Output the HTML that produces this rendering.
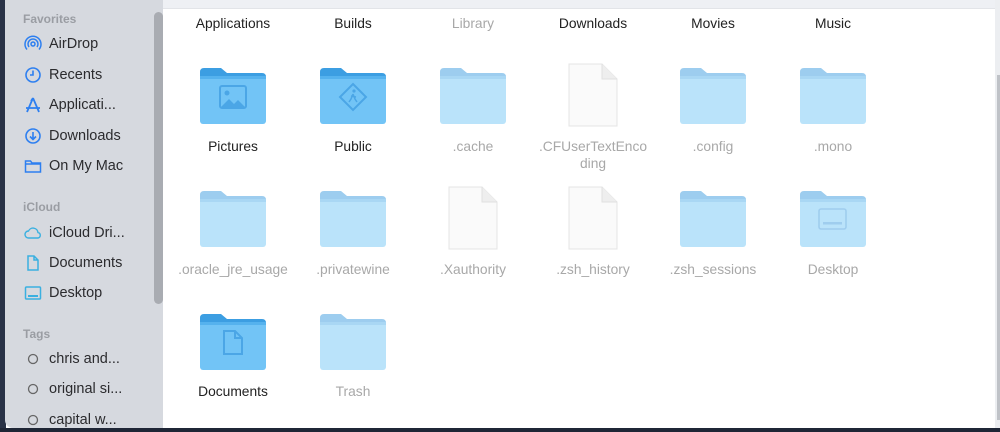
<!DOCTYPE html>
<html><head><meta charset="utf-8"><style>
*{margin:0;padding:0;box-sizing:border-box}
body{width:1000px;height:432px;overflow:hidden;background:#fff;font-family:"Liberation Sans",sans-serif;position:relative}
.lstrip{position:absolute;left:0;top:0;width:6px;height:432px;background:#2a3347}
.side{position:absolute;left:5px;top:0;width:158px;height:428px;background:#d6d9df;border-radius:0 0 0 8px}
.sb{position:absolute;left:149px;top:12px;width:9px;height:292px;background:#a9acb2;border-radius:5px}
.sec{position:absolute;left:23px;font-size:12px;color:#9a9da3;font-weight:bold}
.it{position:absolute;left:49px;font-size:14.5px;color:#2b2b2e}
.ic{position:absolute;left:24px;width:18px;height:18px}
.top{position:absolute;left:163px;top:0;width:837px;height:9px;background:#eef0f4;border-bottom:1px solid #e2e4e8}
.rstrip{position:absolute;left:995px;top:0;width:5px;height:432px;background:#eceef1}
.rbar{position:absolute;left:997px;top:75px;width:3px;height:345px;background:#bfc2c7}
.bot{position:absolute;left:0;top:428px;width:1000px;height:4px;background:#1f2636}
.lab{position:absolute;width:120px;text-align:center;font-size:13.8px;color:#222;line-height:17px}
.f{color:#a8a8a8}
svg.fd{position:absolute;width:66px;height:58px}
svg.doc{position:absolute;width:50px;height:64px}
</style></head><body>
<div class="lstrip"></div>
<div class="side">
<div class="sb"></div>
</div>
<div class="sec" style="top:12px">Favorites</div>
<svg class="ic" style="top:35px" viewBox="0 0 18 18" fill="none" stroke="#2d7ff0" stroke-width="1.5"><circle cx="9" cy="9" r="2"/><path d="M5 12a5 5 0 1 1 8 0M3 14.5a8 8 0 1 1 12 0"/></svg>
<div class="it" style="top:36px">AirDrop</div>
<svg class="ic" style="top:66px" viewBox="0 0 18 18" fill="none" stroke="#2d7ff0" stroke-width="1.6"><circle cx="9" cy="9" r="7"/><path d="M9 4.5V9H6"/></svg>
<div class="it" style="top:67px">Recents</div>
<svg class="ic" style="top:96px" viewBox="0 0 18 18" fill="none" stroke="#2d7ff0" stroke-width="1.8"><path d="M9 2L3 16M9 2l6 14M2 12h14M9 2l-2 3"/></svg>
<div class="it" style="top:97px">Applicati...</div>
<svg class="ic" style="top:127px" viewBox="0 0 18 18" fill="none" stroke="#2d7ff0" stroke-width="1.6"><circle cx="9" cy="9" r="7"/><path d="M9 5v7M6 9.5l3 3 3-3"/></svg>
<div class="it" style="top:128px">Downloads</div>
<svg class="ic" style="top:157px" viewBox="0 0 18 18" fill="none" stroke="#2d7ff0" stroke-width="1.5"><path d="M1.5 4h5l1.5 2h8.5v9h-15zM1.5 7h15"/></svg>
<div class="it" style="top:158px">On My Mac</div>
<div class="sec" style="top:200px">iCloud</div>
<svg class="ic" style="top:224px" viewBox="0 0 18 18" fill="none" stroke="#3ab0e0" stroke-width="1.4"><path d="M4.5 14a3.5 3.5 0 0 1 0-7 5 5 0 0 1 9.5 1.5A2.8 2.8 0 0 1 14 14z"/></svg>
<div class="it" style="top:225px">iCloud Dri...</div>
<svg class="ic" style="top:254px" viewBox="0 0 18 18" fill="none" stroke="#3ab0e0" stroke-width="1.5"><path d="M4 2h6l4 4v10H4zM10 2v4h4"/></svg>
<div class="it" style="top:255px">Documents</div>
<svg class="ic" style="top:284px" viewBox="0 0 18 18" fill="none" stroke="#3ab0e0" stroke-width="1.5"><rect x="1.5" y="3" width="15" height="12" rx="1"/><path d="M4 12h10" stroke-width="2"/></svg>
<div class="it" style="top:285px">Desktop</div>
<div class="sec" style="top:327px">Tags</div>
<svg class="ic" style="top:350px" viewBox="0 0 18 18" fill="none" stroke="#666" stroke-width="1.3"><circle cx="9" cy="9" r="4.5"/></svg>
<div class="it" style="top:351px">chris and...</div>
<svg class="ic" style="top:380px" viewBox="0 0 18 18" fill="none" stroke="#666" stroke-width="1.3"><circle cx="9" cy="9" r="4.5"/></svg>
<div class="it" style="top:381px">original si...</div>
<svg class="ic" style="top:411px" viewBox="0 0 18 18" fill="none" stroke="#666" stroke-width="1.3"><circle cx="9" cy="9" r="4.5"/></svg>
<div class="it" style="top:412px">capital w...</div>

<div class="top"></div>
<div class="rstrip"></div><div class="rbar"></div>

<div class="lab" style="left:173px;top:15px">Applications</div>
<div class="lab" style="left:293px;top:15px">Builds</div>
<div class="lab f" style="left:413px;top:15px">Library</div>
<div class="lab" style="left:533px;top:15px">Downloads</div>
<div class="lab" style="left:653px;top:15px">Movies</div>
<div class="lab" style="left:773px;top:15px">Music</div>

<!-- row 1 -->
<svg class="fd" style="left:200px;top:67px" viewBox="0 0 66 58"><path d="M0 5Q0 1 4 1H21L27 6H62Q66 6 66 10V20H0Z" fill="#3c9ee2"/><rect x="0" y="9" width="66" height="48" rx="3" fill="#72c4f6"/><rect x="0" y="9" width="66" height="3" fill="#55b2ee"/><rect x="20" y="19" width="26" height="22" rx="2" fill="none" stroke="#4ba6e6" stroke-width="2"/><circle cx="27" cy="26" r="2.5" fill="#4ba6e6"/><path d="M21 40l8-8 5 5 4-4 7 7z" fill="#4ba6e6"/></svg>
<svg class="fd" style="left:320px;top:67px" viewBox="0 0 66 58"><path d="M0 5Q0 1 4 1H21L27 6H62Q66 6 66 10V20H0Z" fill="#3c9ee2"/><rect x="0" y="9" width="66" height="48" rx="3" fill="#72c4f6"/><rect x="0" y="9" width="66" height="3" fill="#55b2ee"/><path d="M33 17L46 30 33 43 20 30Z" fill="none" stroke="#4ba6e6" stroke-width="2"/><circle cx="34" cy="24" r="1.6" fill="#4ba6e6"/><path d="M33 27l-2 5-2 3M33 27l2 5 2 3M31 29l5 1" stroke="#4ba6e6" stroke-width="1.5" fill="none"/></svg>
<svg class="fd" style="left:440px;top:67px" viewBox="0 0 66 58"><path d="M0 5Q0 1 4 1H21L27 6H62Q66 6 66 10V20H0Z" fill="#9dcdef"/><rect x="0" y="9" width="66" height="48" rx="3" fill="#bae3fa"/><rect x="0" y="9" width="66" height="3" fill="#a9d7f4"/></svg>
<svg class="doc" style="left:568px;top:63px" viewBox="0 0 50 64"><path d="M1 1H34L49 16V63H1Z" fill="#fafafa" stroke="#e4e4e4"/><path d="M34 1V16H49" fill="#eee" stroke="#e0e0e0"/></svg>
<svg class="fd" style="left:680px;top:67px" viewBox="0 0 66 58"><path d="M0 5Q0 1 4 1H21L27 6H62Q66 6 66 10V20H0Z" fill="#9dcdef"/><rect x="0" y="9" width="66" height="48" rx="3" fill="#bae3fa"/><rect x="0" y="9" width="66" height="3" fill="#a9d7f4"/></svg>
<svg class="fd" style="left:800px;top:67px" viewBox="0 0 66 58"><path d="M0 5Q0 1 4 1H21L27 6H62Q66 6 66 10V20H0Z" fill="#9dcdef"/><rect x="0" y="9" width="66" height="48" rx="3" fill="#bae3fa"/><rect x="0" y="9" width="66" height="3" fill="#a9d7f4"/></svg>
<div class="lab" style="left:173px;top:138px">Pictures</div>
<div class="lab" style="left:293px;top:138px">Public</div>
<div class="lab f" style="left:413px;top:138px">.cache</div>
<div class="lab f" style="left:533px;top:138px">.CFUserTextEnco<br>ding</div>
<div class="lab f" style="left:653px;top:138px">.config</div>
<div class="lab f" style="left:773px;top:138px">.mono</div>

<!-- row 2 -->
<svg class="fd" style="left:200px;top:190px" viewBox="0 0 66 58"><path d="M0 5Q0 1 4 1H21L27 6H62Q66 6 66 10V20H0Z" fill="#9dcdef"/><rect x="0" y="9" width="66" height="48" rx="3" fill="#bae3fa"/><rect x="0" y="9" width="66" height="3" fill="#a9d7f4"/></svg>
<svg class="fd" style="left:320px;top:190px" viewBox="0 0 66 58"><path d="M0 5Q0 1 4 1H21L27 6H62Q66 6 66 10V20H0Z" fill="#9dcdef"/><rect x="0" y="9" width="66" height="48" rx="3" fill="#bae3fa"/><rect x="0" y="9" width="66" height="3" fill="#a9d7f4"/></svg>
<svg class="doc" style="left:448px;top:186px" viewBox="0 0 50 64"><path d="M1 1H34L49 16V63H1Z" fill="#fafafa" stroke="#e4e4e4"/><path d="M34 1V16H49" fill="#eee" stroke="#e0e0e0"/></svg>
<svg class="doc" style="left:568px;top:186px" viewBox="0 0 50 64"><path d="M1 1H34L49 16V63H1Z" fill="#fafafa" stroke="#e4e4e4"/><path d="M34 1V16H49" fill="#eee" stroke="#e0e0e0"/></svg>
<svg class="fd" style="left:680px;top:190px" viewBox="0 0 66 58"><path d="M0 5Q0 1 4 1H21L27 6H62Q66 6 66 10V20H0Z" fill="#9dcdef"/><rect x="0" y="9" width="66" height="48" rx="3" fill="#bae3fa"/><rect x="0" y="9" width="66" height="3" fill="#a9d7f4"/></svg>
<svg class="fd" style="left:800px;top:190px" viewBox="0 0 66 58"><path d="M0 5Q0 1 4 1H21L27 6H62Q66 6 66 10V20H0Z" fill="#9dcdef"/><rect x="0" y="9" width="66" height="48" rx="3" fill="#bae3fa"/><rect x="0" y="9" width="66" height="3" fill="#a9d7f4"/><rect x="19" y="19" width="27" height="20" rx="2" fill="none" stroke="#9fcdee" stroke-width="1.6"/><rect x="23" y="32" width="19" height="2.5" fill="#9fcdee"/></svg>
<div class="lab f" style="left:173px;top:261px">.oracle_jre_usage</div>
<div class="lab f" style="left:293px;top:261px">.privatewine</div>
<div class="lab f" style="left:413px;top:261px">.Xauthority</div>
<div class="lab f" style="left:533px;top:261px">.zsh_history</div>
<div class="lab f" style="left:653px;top:261px">.zsh_sessions</div>
<div class="lab f" style="left:773px;top:261px">Desktop</div>

<!-- row 3 -->
<svg class="fd" style="left:200px;top:313px" viewBox="0 0 66 58"><path d="M0 5Q0 1 4 1H21L27 6H62Q66 6 66 10V20H0Z" fill="#3c9ee2"/><rect x="0" y="9" width="66" height="48" rx="3" fill="#72c4f6"/><rect x="0" y="9" width="66" height="3" fill="#55b2ee"/><path d="M24 18h11l7 7v16H24z M35 18v7h7" fill="none" stroke="#4ba6e6" stroke-width="2"/></svg>
<svg class="fd" style="left:320px;top:313px" viewBox="0 0 66 58"><path d="M0 5Q0 1 4 1H21L27 6H62Q66 6 66 10V20H0Z" fill="#9dcdef"/><rect x="0" y="9" width="66" height="48" rx="3" fill="#bae3fa"/><rect x="0" y="9" width="66" height="3" fill="#a9d7f4"/></svg>
<div class="lab" style="left:173px;top:383px">Documents</div>
<div class="lab f" style="left:293px;top:383px">Trash</div>

<div class="bot"></div>
</body></html>
